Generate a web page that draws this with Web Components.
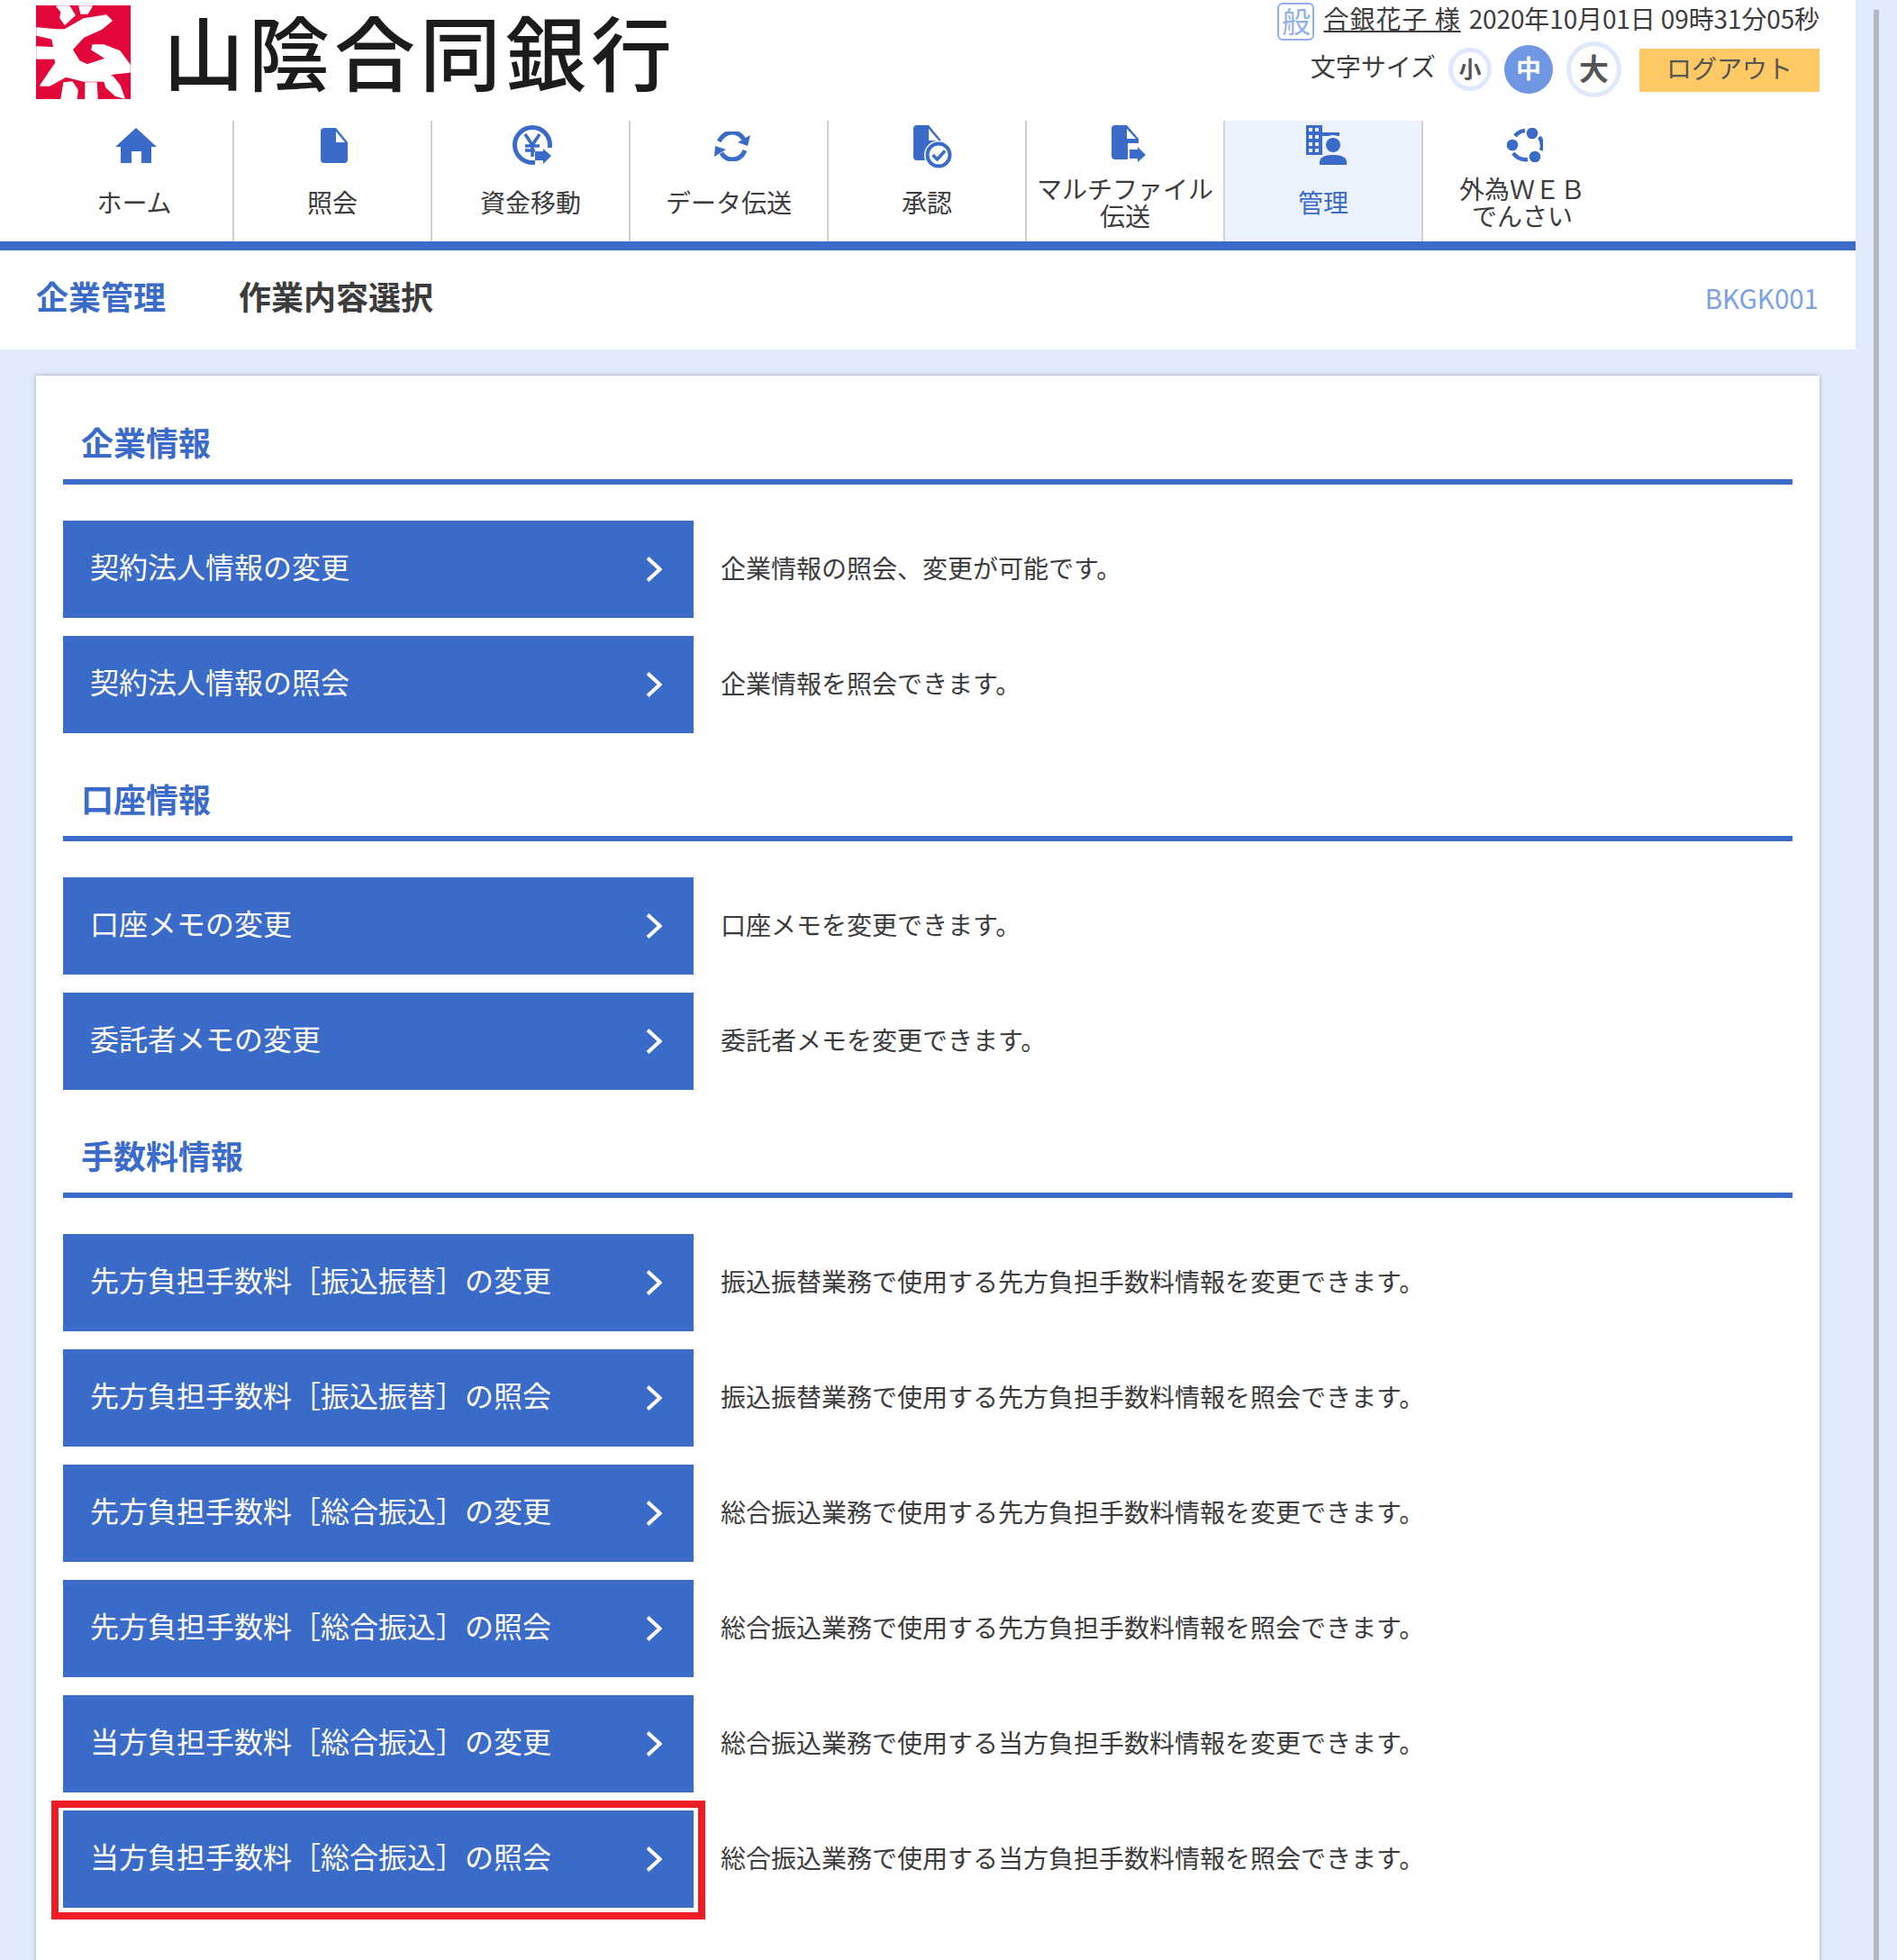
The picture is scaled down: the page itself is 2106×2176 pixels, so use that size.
<!DOCTYPE html>
<html lang="ja">
<head>
<meta charset="utf-8">
<title>作業内容選択</title>
<style>
  html, body { margin: 0; height: 2176px; overflow: hidden; background: #e0ebfc; }
  body {
    font-family: "Noto Sans CJK JP", sans-serif;
    color: #333;
    position: relative;
  }
</style>
</head>
<body>
<bank-page></bank-page>

<script>
const BLUE = '#3b6bc9';

const ICONS = {
  home: `<svg width="46" height="39" viewBox="0 0 46 39"><path fill="${BLUE}" d="M23 0 46 21H40V39H29V26H18V39H6V21H0Z"/></svg>`,
  doc: `<svg width="30" height="39" viewBox="0 0 30 39"><path fill="${BLUE}" d="M4 0H17L30 16V35a4 4 0 0 1-4 4H4a4 4 0 0 1-4-4V4a4 4 0 0 1 4-4Z"/><path fill="#fff" d="M17 4 27 16H17Z"/></svg>`,
  yen: `<svg width="44" height="44" viewBox="0 0 44 44"><circle cx="22" cy="22" r="19.5" fill="none" stroke="${BLUE}" stroke-width="5"/><path fill="#fff" d="M25 25H44V44H25Z"/><path fill="${BLUE}" d="M25 29H34V26L43 34 34 43V39H25Z"/><path fill="none" stroke="${BLUE}" stroke-width="3.6" d="M14 10 22 22 30 10M22 21V35M14 23H30M14 28H25"/></svg>`,
  sync: `<svg width="40" height="33" viewBox="13 12 40 33"><g fill="none" stroke="${BLUE}" stroke-width="5"><path d="M18 23Q24 13 33 13 41 13 46 21"/><path d="M47 33Q43 43 33 43 25 43 21 36"/></g><path fill="${BLUE}" d="M53 16 50 28 39 24ZM14 28 26 32 13 40Z"/></svg>`,
  approve: `<svg width="44" height="48" viewBox="0 0 44 48"><path fill="${BLUE}" d="M4 0H17L31 17V35a4 4 0 0 1-4 4H4a4 4 0 0 1-4-4V4a4 4 0 0 1 4-4Z"/><path fill="#fff" d="M17 4 28 17H17Z"/><circle cx="28" cy="33" r="16" fill="#fff"/><circle cx="28" cy="33" r="12.5" fill="#fff" stroke="${BLUE}" stroke-width="4"/><path fill="none" stroke="${BLUE}" stroke-width="3.6" d="M21.500 33 26.500 38 35 28.500"/></svg>`,
  multi: `<svg width="38" height="42" viewBox="0 0 38 42"><path fill="${BLUE}" d="M4 0H17L30 15V38H4a4 4 0 0 1-4-4V4a4 4 0 0 1 4-4Z"/><path fill="#fff" d="M17 4 27 15H17ZM18 20H30V42H18Z"/><path fill="${BLUE}" d="M20 27H29V24L38 33 29 41V37H20Z"/></svg>`,
  admin: `<svg width="46" height="44" viewBox="0 0 46 44"><path fill="${BLUE}" d="M0 0H18V8H37V12H18V33H0Z"/><path fill="#ebf1fd" d="M3 3H7V7H3ZM10 3H14V7H10ZM3 11H7V15H3ZM10 11H14V15H10ZM3 19H7V23H3ZM10 19H14V23H10ZM3 26H7V30H3ZM10 26H14V30H10Z"/><circle cx="30" cy="22" r="11" fill="#ebf1fd"/><circle cx="30" cy="22" r="8" fill="${BLUE}"/><path fill="${BLUE}" d="M15 44V41C15 36 20 33 30 33S45 36 45 41V44Z"/></svg>`,
  circle: `<svg width="40" height="38" viewBox="12 8 40 38"><g fill="none" stroke="${BLUE}" stroke-width="4.500"><path d="M21 17A16 16 0 0 1 32 11"/><path d="M48 18A17 17 0 0 1 50 33"/><path d="M19 36A17 17 0 0 0 35 43"/></g><circle cx="40" cy="14" r="6.300" fill="${BLUE}"/><circle cx="18" cy="27" r="6.300" fill="${BLUE}"/><circle cx="43" cy="40" r="6.300" fill="${BLUE}"/></svg>`
};

class BankLogo extends HTMLElement {
  constructor() {
    super();
    this.attachShadow({ mode: 'open' });
    this.shadowRoot.innerHTML = `
      <style>
        :host { display: flex; align-items: flex-start; }
        svg { display: block; margin-top: 6px; }
        span {
          margin-left: 36px;
          font: 500 90px/110px "Noto Sans CJK JP", sans-serif;
          letter-spacing: 5px; color: #1c1c1c; white-space: nowrap;
        }
      </style>
      <svg width="105" height="104" viewBox="0 0 105 104">
        <rect width="105" height="104" fill="#e2063a"/>
        <g fill="#fff" stroke="#fff" stroke-width="1.500" stroke-linejoin="round">
          <path d="M23 1H37L43 11 32 21 27 14 28 7Z"/>
          <path d="M48 1H62L57 9H50Z"/>
          <path d="M1 25 23 27H32L53 15 78 11 84 17 73 26 53 35 40 49 48 62 57 66 78 59 62 49 63 44H75L93 51 104 66V74L85 76 75 84H53L33 79 15 89H5L15 74 22 64 21 59H1V46L20 47 18 37 1 33Z"/>
          <path d="M28 104 31 86 40 85 46 94 45 104Z"/>
          <path d="M55 104V86H67L68 104Z"/>
          <path d="M75 81 85 79 93 89 98 103 88 100 78 91Z"/>
        </g>
      </svg>
      <span>山陰合同銀行</span>`;
  }
}

class UserPanel extends HTMLElement {
  constructor() {
    super();
    this.attachShadow({ mode: 'open' });
    this.shadowRoot.innerHTML = `
      <style>
        :host { display: block; font-size: 28px; line-height: 40px; color: #3c3c3c; }
        .user { display: flex; justify-content: flex-end; align-items: center; height: 45px; padding-top: 3px; box-sizing: border-box; }
        .kind {
          width: 41px; height: 42px; box-sizing: border-box;
          border: 2px solid #8fb0ea; border-radius: 6px;
          color: #8fb0ea; font-size: 32px; line-height: 34px; text-align: center;
          margin-right: 10px;
        }
        .name { text-decoration: underline; letter-spacing: 1px; margin-right: 9px; margin-top: -9px; }
        .date { margin-top: -9px; white-space: nowrap; letter-spacing: -.12px; }
        .size { display: flex; justify-content: flex-end; align-items: center; height: 62px; margin-top: 1px; }
        .label { margin-right: 14px; margin-top: -8px; }
        .dot {
          box-sizing: border-box; border-radius: 50%; border: 5px solid #dfe9fb;
          display: flex; align-items: center; justify-content: center; padding-bottom: 4px;
          font-weight: bold; color: #555; background: #fff;
        }
        .sm { width: 48px; height: 48px; font-size: 25px; margin-right: 14px; }
        .md { width: 54px; height: 54px; font-size: 28px; margin-right: 15px; background: #6f97e4; border: 0; color: #fff; }
        .lg { width: 61px; height: 62px; font-size: 33px; margin-right: 20px; }
        .logout {
          width: 200px; height: 48px; box-sizing: border-box; margin-top: 2px; padding-bottom: 6px;
          background: #ffc966; color: #555;
          display: flex; align-items: center; justify-content: center;
        }
      </style>
      <div class="user">
        <div class="kind">般</div>
        <span class="name">合銀花子 様</span>
        <span class="date">2020年10月01日 09時31分05秒</span>
      </div>
      <div class="size">
        <span class="label">文字サイズ</span>
        <div class="dot sm">小</div>
        <div class="dot md">中</div>
        <div class="dot lg">大</div>
        <div class="logout">ログアウト</div>
      </div>`;
  }
}

class BankHeader extends HTMLElement {
  constructor() {
    super();
    this.attachShadow({ mode: 'open' });
    this.shadowRoot.innerHTML = `
      <style>
        :host {
          display: flex; justify-content: space-between; align-items: flex-start;
          height: 134px; padding: 0 40px; background: #fff;
        }
      </style>
      <bank-logo></bank-logo>
      <user-panel></user-panel>`;
  }
}

class NavItem extends HTMLElement {
  constructor() {
    super();
    this.attachShadow({ mode: 'open' });
    const icon = ICONS[this.getAttribute('icon')];
    const top = this.getAttribute('top') || 8;
    const dx = this.getAttribute('dx') || 0;
    this.shadowRoot.innerHTML = `
      <style>
        :host {
          display: block; width: 220px; height: 134px; box-sizing: border-box;
          border-right: 2px solid #cfcfcf; color: #3c3c3c; text-align: center;
        }
        :host([active]) { background: #ebf1fd; color: ${BLUE}; border-left: 2px solid #cfd6e2; margin-left: -2px; width: 222px; }
        :host([last]) { border-right: 0; }
        .icon { height: 56px; display: flex; justify-content: center; align-items: flex-start; padding-top: ${top}px; box-sizing: border-box; }
        svg { display: block; transform: translateX(${dx}px); }
        .text { height: 68px; display: flex; align-items: center; justify-content: center; font-size: 28px; line-height: 30px; }
      </style>
      <div class="icon">${icon}</div>
      <div class="text"><div><slot></slot></div></div>`;
  }
}

class BankNav extends HTMLElement {
  constructor() {
    super();
    this.attachShadow({ mode: 'open' });
    this.shadowRoot.innerHTML = `
      <style>
        :host {
          display: flex; height: 134px; padding-left: 40px;
          border-bottom: 10px solid ${BLUE}; background: #fff;
        }
      </style>
      <slot></slot>`;
  }
}

class TitleBar extends HTMLElement {
  constructor() {
    super();
    this.attachShadow({ mode: 'open' });
    this.shadowRoot.innerHTML = `
      <style>
        :host {
          display: flex; align-items: center; height: 110px; box-sizing: border-box; padding: 0 41px 10px 40px;
          background: #fff; font-size: 36px; font-weight: bold;
        }
        .main { color: ${BLUE}; margin-right: 81px; }
        .sub { color: #3c3c3c; flex: 1; }
        .code { color: #7da1e8; font-size: 29.500px; font-weight: normal; margin-top: 4px; }
      </style>
      <span class="main"><slot name="main"></slot></span>
      <span class="sub"><slot name="sub"></slot></span>
      <span class="code"><slot name="code"></slot></span>`;
  }
}

class MenuSection extends HTMLElement {
  constructor() {
    super();
    this.attachShadow({ mode: 'open' });
    this.shadowRoot.innerHTML = `
      <style>
        :host { display: block; }
        h2 {
          margin: 0; height: 120px; box-sizing: border-box; padding: 49px 0 0 20px;
          font-size: 36px; line-height: 46px; font-weight: bold; color: ${BLUE};
          border-bottom: 6px solid ${BLUE};
        }
        .rows { display: flex; flex-direction: column; gap: 20px; padding-top: 40px; }
      </style>
      <h2>${this.getAttribute('heading')}</h2>
      <div class="rows"><slot></slot></div>`;
  }
}

class MenuRow extends HTMLElement {
  constructor() {
    super();
    this.attachShadow({ mode: 'open' });
    this.shadowRoot.innerHTML = `
      <style>
        :host { display: flex; align-items: center; position: relative; height: 108px; }
        .btn {
          width: 700px; height: 108px; box-sizing: border-box; padding: 0 35px 9px 30px;
          background: ${BLUE}; color: #fff; font-size: 32px;
          display: flex; align-items: center; justify-content: space-between;
        }
        svg { display: block; margin-top: 9px; }
        .desc { margin-left: 30px; margin-top: -4px; font-size: 28px; color: #3c3c3c; white-space: nowrap; }
        .mark {
          position: absolute; left: -13px; top: -11px; width: 726px; height: 132px;
          box-sizing: border-box; border: 8px solid #ee1c25;
        }
      </style>
      <div class="btn"><span>${this.getAttribute('label')}</span>
        <svg width="18" height="28" viewBox="0 0 18 28"><path fill="none" stroke="#fff" stroke-width="4" d="M2 1.500 15.500 14 2 26.500"/></svg>
      </div>
      <div class="desc"><slot></slot></div>
      ${this.hasAttribute('marked') ? '<div class="mark"></div>' : ''}`;
  }
}

class MenuCard extends HTMLElement {
  constructor() {
    super();
    this.attachShadow({ mode: 'open' });
    this.shadowRoot.innerHTML = `
      <style>
        :host {
          display: block; width: 1980px; min-height: 1800px; box-sizing: border-box;
          margin: 29px 0 0 40px; padding: 1px 30px 60px;
          background: #fff; box-shadow: 0 0 5px rgba(80, 90, 120, .45);
        }
      </style>
      <slot></slot>`;
  }
}

class BankPage extends HTMLElement {
  constructor() {
    super();
    this.attachShadow({ mode: 'open' });
    this.shadowRoot.innerHTML = `
      <style>
        :host { display: block; width: 2060px; }
        .scroll { position: absolute; left: 2080px; top: 11px; bottom: 0; width: 6px; background: #b3b9c4; }
      </style>
      <bank-header></bank-header>
      <bank-nav>
        <nav-item icon="home" dx="2">ホーム</nav-item>
        <nav-item icon="doc" dx="2">照会</nav-item>
        <nav-item icon="yen" dx="2" top="5">資金移動</nav-item>
        <nav-item icon="sync" dx="4" top="12">データ伝送</nav-item>
        <nav-item icon="approve" dx="7" top="5">承認</nav-item>
        <nav-item icon="multi" dx="4" top="5">マルチファイル<br>伝送</nav-item>
        <nav-item icon="admin" dx="4" top="5" active>管理</nav-item>
        <nav-item icon="circle" dx="3" top="8" last>外為ＷＥＢ<br>でんさい</nav-item>
      </bank-nav>
      <title-bar>
        <span slot="main">企業管理</span>
        <span slot="sub">作業内容選択</span>
        <span slot="code">BKGK001</span>
      </title-bar>
      <menu-card>
        <menu-section heading="企業情報">
          <menu-row label="契約法人情報の変更">企業情報の照会、変更が可能です。</menu-row>
          <menu-row label="契約法人情報の照会">企業情報を照会できます。</menu-row>
        </menu-section>
        <menu-section heading="口座情報">
          <menu-row label="口座メモの変更">口座メモを変更できます。</menu-row>
          <menu-row label="委託者メモの変更">委託者メモを変更できます。</menu-row>
        </menu-section>
        <menu-section heading="手数料情報">
          <menu-row label="先方負担手数料［振込振替］の変更">振込振替業務で使用する先方負担手数料情報を変更できます。</menu-row>
          <menu-row label="先方負担手数料［振込振替］の照会">振込振替業務で使用する先方負担手数料情報を照会できます。</menu-row>
          <menu-row label="先方負担手数料［総合振込］の変更">総合振込業務で使用する先方負担手数料情報を変更できます。</menu-row>
          <menu-row label="先方負担手数料［総合振込］の照会">総合振込業務で使用する先方負担手数料情報を照会できます。</menu-row>
          <menu-row label="当方負担手数料［総合振込］の変更">総合振込業務で使用する当方負担手数料情報を変更できます。</menu-row>
          <menu-row label="当方負担手数料［総合振込］の照会" marked>総合振込業務で使用する当方負担手数料情報を照会できます。</menu-row>
        </menu-section>
      </menu-card>
      <div class="scroll"></div>`;
  }
}

customElements.define('bank-logo', BankLogo);
customElements.define('user-panel', UserPanel);
customElements.define('bank-header', BankHeader);
customElements.define('nav-item', NavItem);
customElements.define('bank-nav', BankNav);
customElements.define('title-bar', TitleBar);
customElements.define('menu-section', MenuSection);
customElements.define('menu-row', MenuRow);
customElements.define('menu-card', MenuCard);
customElements.define('bank-page', BankPage);
</script>
</body>
</html>
